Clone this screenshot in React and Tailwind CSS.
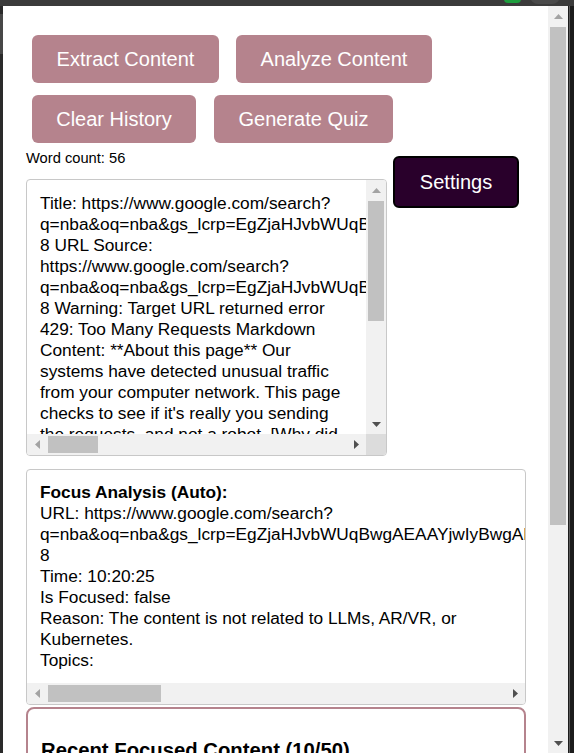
import React from "react";

const URLQ =
  "q=nba&oq=nba&gs_lcrp=EgZjaHJvbWUqBwgAEAAYjwIyBwgAEAAYjwIyBggBEEUYOTIHCAIQABiPAtIBCDEyNzJqMGo0qAIAsAIB&sourceid=chrome&ie=UTF-8";

function Tri({ dir, color }) {
  const pts = {
    up: "0,5 4.5,0 9,5",
    down: "0,0 4.5,5 9,0",
    left: "5,0 0,4.5 5,9",
    right: "0,0 5,4.5 0,9",
  }[dir];
  const w = dir === "up" || dir === "down" ? 9 : 5;
  const h = dir === "up" || dir === "down" ? 5 : 9;
  return (
    <svg width={w} height={h} viewBox={`0 0 ${w} ${h}`}>
      <polygon points={pts} fill={color} />
    </svg>
  );
}

function VScroll({ thumbTop, thumbH }) {
  return (
    <div className="w-[20px] shrink-0 bg-[#f1f1f1] flex flex-col">
      <div className="h-[20px] flex items-center justify-center">
        <Tri dir="up" color="#a3a3a3" />
      </div>
      <div className="flex-1 flex flex-col px-[2px]">
        <div style={{ marginTop: thumbTop, height: thumbH }} className="bg-[#c1c1c1]" />
      </div>
      <div className="h-[20px] flex items-center justify-center">
        <Tri dir="down" color="#505050" />
      </div>
    </div>
  );
}

function HScroll({ thumbLeft, thumbW, corner }) {
  return (
    <div className="h-[21px] shrink-0 flex">
      <div className="flex-1 bg-[#f1f1f1] flex items-center">
        <div className="w-[20px] flex items-center justify-center">
          <Tri dir="left" color="#a3a3a3" />
        </div>
        <div className="flex-1 flex items-center h-full py-[2px]">
          <div style={{ marginLeft: thumbLeft, width: thumbW }} className="h-full bg-[#c1c1c1]" />
        </div>
        <div className="w-[20px] flex items-center justify-center">
          <Tri dir="right" color="#505050" />
        </div>
      </div>
      {corner && <div className="w-[20px] bg-[#dcdcdc]" />}
    </div>
  );
}

export default function App() {
  const btn =
    "h-[48px] rounded-[6px] bg-[#b5838d] text-white text-[20px] flex items-center justify-center";
  return (
    <div className="w-[574px] h-[753px] overflow-hidden bg-[#2b2b2b] flex flex-col font-['Liberation_Sans',Arial,sans-serif]">
      <div className="h-[6px] shrink-0 bg-[#3b3b3b] relative">
        <div className="absolute left-[504px] top-[-6px] w-[17px] h-[9px] rounded-[4px] bg-[#1e9e3e]" />
        <div className="absolute left-[530px] top-[-12px] w-[30px] h-[16px] rounded-full bg-[#4a4a4a]" />
      </div>
      <div className="flex flex-1 min-h-0">
        <div className="w-[3px] shrink-0 bg-[#2a2a2a] flex flex-col">
          <div className="h-[8px]" />
          <div className="h-[40px] bg-[#474747]" />
        </div>
        <div className="w-[545px] shrink-0 bg-white overflow-hidden">
          <div className="pl-[23px] pt-[29px] text-black">
            <div className="ml-[6px] flex gap-[17px]">
              <div className={`${btn} w-[187px]`}>Extract Content</div>
              <div className={`${btn} w-[196px]`}>Analyze Content</div>
            </div>
            <div className="ml-[6px] mt-[12px] flex gap-[18px]">
              <div className={`${btn} w-[164px]`}>Clear History</div>
              <div className={`${btn} w-[179px]`}>Generate Quiz</div>
            </div>
            <div className="flex items-start mt-[7px]">
              <div className="w-[361px] shrink-0">
                <div className="text-[14.7px] leading-[17px]">Word count: 56</div>
                <div className="mt-[12px] h-[277px] border border-[#c8c8c8] rounded-[4px] flex flex-col overflow-hidden">
                  <div className="flex flex-1 min-h-0">
                    <div className="flex-1 min-w-0 overflow-hidden p-[13px] text-[17.3px] leading-[21px] [overflow-wrap:normal] break-normal">
                      Title: https://www.google.com/search?{URLQ} URL Source: https://www.google.com/search?{URLQ} Warning: Target URL returned error 429: Too Many Requests Markdown Content: **About this page** Our systems have detected unusual traffic from your computer network. This page checks to see if it's really you sending the requests, and not a robot. [Why did this happen?](https://www.google.com/policies/terms/) IP address: 0.0.0.0 Time: 2024-10-20T10:20:25Z URL: https://www.google.com/search
                    </div>
                    <VScroll thumbTop={1} thumbH={120} />
                  </div>
                  <HScroll thumbLeft={1} thumbW={50} corner />
                </div>
              </div>
              <div className="ml-[6px] mt-[6px] w-[126px] h-[52px] shrink-0 rounded-[6px] border-2 border-black bg-[#29002b] text-white text-[20px] flex items-center justify-center">
                Settings
              </div>
            </div>
            <div className="mt-[13px] w-[500px] h-[236px] border border-[#c8c8c8] rounded-[4px] flex flex-col overflow-hidden">
              <div className="flex-1 min-h-0 overflow-hidden px-[13px] pt-[12px] text-[17.3px] leading-[21px] [overflow-wrap:normal] break-normal">
                <div className="font-bold">Focus Analysis (Auto):</div>
                <div>URL: https://www.google.com/search?{URLQ}</div>
                <div>Time: 10:20:25</div>
                <div>Is Focused: false</div>
                <div>Reason: The content is not related to LLMs, AR/VR, or Kubernetes.</div>
                <div>Topics:</div>
              </div>
              <HScroll thumbLeft={1} thumbW={113} />
            </div>
            <div className="mt-[2px] w-[500px] h-[200px] border-2 border-[#b5838d] rounded-[8px] px-[13px] pt-[30px]">
              <div className="font-bold text-[20.3px] leading-[23px]">Recent Focused Content (10/50)</div>
            </div>
          </div>
        </div>
        <VScroll thumbTop={1} thumbH={498} />
        <div className="w-[6px] shrink-0 bg-[#1c1c1c] flex">
          <div className="w-[1px] bg-[#5a5a5a] ml-[1px]" />
        </div>
      </div>
    </div>
  );
}
